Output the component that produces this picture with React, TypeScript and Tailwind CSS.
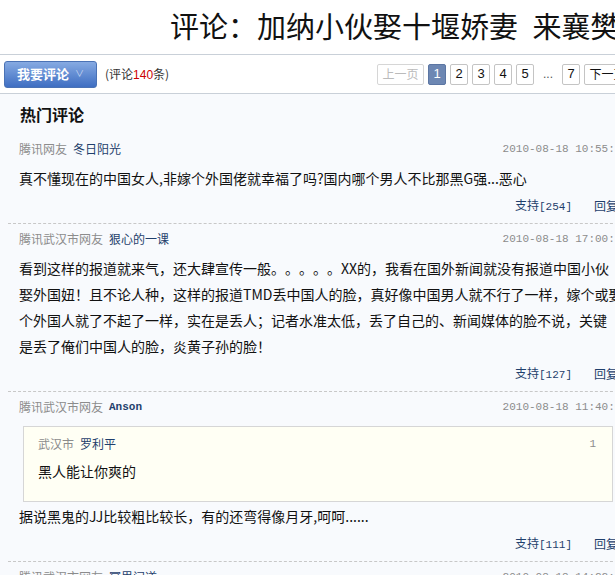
import React from "react";

type Comment = {
  area: string;
  name: string;
  nameMono?: boolean;
  time: string;
  lines: string[];
  support: number;
  quote?: { area: string; name: string; floor: number; text: string };
};

const comments: Comment[] = [
  {
    area: "腾讯网友",
    name: "冬日阳光",
    time: "2010-08-18 10:55:52",
    lines: ["真不懂现在的中国女人,非嫁个外国佬就幸福了吗?国内哪个男人不比那黑G强...恶心"],
    support: 254,
  },
  {
    area: "腾讯武汉市网友",
    name: "狠心的一课",
    time: "2010-08-18 17:00:37",
    lines: [
      "看到这样的报道就来气，还大肆宣传一般。。。。。XX的，我看在国外新闻就没有报道中国小伙",
      "娶外国妞！且不论人种，这样的报道TMD丢中国人的脸，真好像中国男人就不行了一样，嫁个或娶",
      "个外国人就了不起了一样，实在是丢人；记者水准太低，丢了自己的、新闻媒体的脸不说，关键",
      "是丢了俺们中国人的脸，炎黄子孙的脸！",
    ],
    support: 127,
  },
  {
    area: "腾讯武汉市网友",
    name: "Anson",
    nameMono: true,
    time: "2010-08-18 11:40:07",
    quote: { area: "武汉市", name: "罗利平", floor: 1, text: "黑人能让你爽的" },
    lines: ["据说黑鬼的JJ比较粗比较长，有的还弯得像月牙,呵呵......"],
    support: 111,
  },
  {
    area: "腾讯武汉市网友",
    name: "冥界问道",
    time: "2010-08-18 14:22:29",
    lines: ["……"],
    support: 98,
  },
];

const cjk = "font-['Noto_Sans_CJK_SC',sans-serif] [text-spacing-trim:space-all]";

const CommentItem = ({ c }: { c: Comment }) => (
  <div className="ml-2 w-[620px] border-b border-dashed border-[#c8c8c8] pt-[7px] pb-[9px] pl-[11px]">
    <div className="flex h-4 items-center justify-between text-[12px] leading-4">
      <div className="flex items-center gap-[6px]">
        <span className="text-[#8c8c8c]">{c.area}</span>
        {c.nameMono ? (
          <span className="font-['Liberation_Mono',monospace] text-[11px] font-bold text-[#1f3f6c]">
            {c.name}
          </span>
        ) : (
          <span className="text-[#1f3f6c]">{c.name}</span>
        )}
      </div>
      <span className="font-['Liberation_Mono',monospace] text-[11px] text-[#8c8c8c]">
        {c.time}
      </span>
    </div>

    {c.quote && (
      <div className="mt-[11px] ml-1 w-[590px] border border-[#d6d6d6] bg-[#fffff4] pt-[9px] pr-[16px] pb-[17px] pl-[14px]">
        <div className="flex h-4 items-center justify-between text-[12px] leading-4">
          <div className="flex gap-[6px]">
            <span className="text-[#8c8c8c]">{c.quote.area}</span>
            <span className="text-[#1f3f6c]">{c.quote.name}</span>
          </div>
          <span className="font-['Liberation_Mono',monospace] text-[11px] text-[#8c8c8c]">
            {c.quote.floor}
          </span>
        </div>
        <div className="mt-[6px] text-[14px] leading-[26px] text-[#111]">{c.quote.text}</div>
      </div>
    )}

    <div className={(c.quote ? "mt-[1px]" : "mt-[8px]") + " text-[14px] leading-[26px] text-[#111]"}>
      {c.lines.map((l, i) => (
        <div key={i} className="whitespace-nowrap">
          {l}
        </div>
      ))}
    </div>

    <div className="mt-[7px] flex h-4 items-center justify-end gap-[22px] pr-[10px] text-[12px] leading-4 text-[#1f3f6c]">
      <span>
        支持<span className="font-['Liberation_Mono',monospace] text-[11px]">[{c.support}]</span>
      </span>
      <span>回复</span>
    </div>
  </div>
);

const PageBox = ({ label, active }: { label: string; active?: boolean }) => (
  <span
    className={
      "flex h-[21px] w-[18px] items-center justify-center rounded-[2px] border font-['Liberation_Sans',sans-serif] text-[13px] " +
      (active ? "border-[#5c76a3] bg-[#6d87b3] text-white" : "border-[#c4c4c4] bg-white text-[#111]")
    }
  >
    {label}
  </span>
);

export default function App() {
  return (
    <div className={`h-[575px] w-[615px] overflow-hidden bg-[#f8fafd] ${cjk}`}>
      <div className="w-[660px]">
        {/* TITLE */}
        <div className="h-[55px] border-b border-[#c9d0d8] bg-white pt-[10px] pl-[170px]">
          <h1 className="whitespace-nowrap text-[29px] leading-[30px] text-[#111]">
            评论：加纳小伙娶十堰娇妻{"\u2002"}来襄樊定居
          </h1>
        </div>

        {/* TOOLBAR */}
        <div className="flex h-[39px] w-[631px] items-center justify-between border-b border-[#c9d0d8] bg-white pl-1">
          <div className="flex items-center">
            <button className="flex h-[27px] w-[93px] items-center justify-center gap-[6px] rounded-[3px] border border-[#4a72b5] bg-gradient-to-b from-[#86aae2] to-[#3f6ec2] text-[13px] font-bold text-white">
              我要评论
              <span className="text-[9px] font-normal text-[#c9d8f2]">∨</span>
            </button>
            <span className="ml-2 text-[12px] text-[#333]">
              (评论<span className="font-['Liberation_Sans',sans-serif] text-[#c00]">140</span>条)
            </span>
          </div>
          <div className="flex items-center gap-[4px]">
            <span className="flex h-[21px] w-[47px] items-center justify-center rounded-[2px] border border-[#d6d6d6] bg-white text-[12px] text-[#bbb]">
              上一页
            </span>
            <PageBox label="1" active />
            <PageBox label="2" />
            <PageBox label="3" />
            <PageBox label="4" />
            <PageBox label="5" />
            <span className="w-[20px] text-center font-['Liberation_Sans',sans-serif] text-[12px] text-[#555]">...</span>
            <PageBox label="7" />
            <span className="flex h-[21px] w-[47px] items-center justify-center rounded-[2px] border border-[#c4c4c4] bg-white text-[12px] text-[#111]">
              下一页
            </span>
          </div>
        </div>

        {/* HOT COMMENTS */}
        <div className="flex h-[40px] items-center pl-5">
          <h2 className="text-[16px] font-bold text-[#111]">热门评论</h2>
        </div>

        <div>
          {comments.map((c, i) => (
            <CommentItem key={i} c={c} />
          ))}
        </div>
      </div>
    </div>
  );
}
